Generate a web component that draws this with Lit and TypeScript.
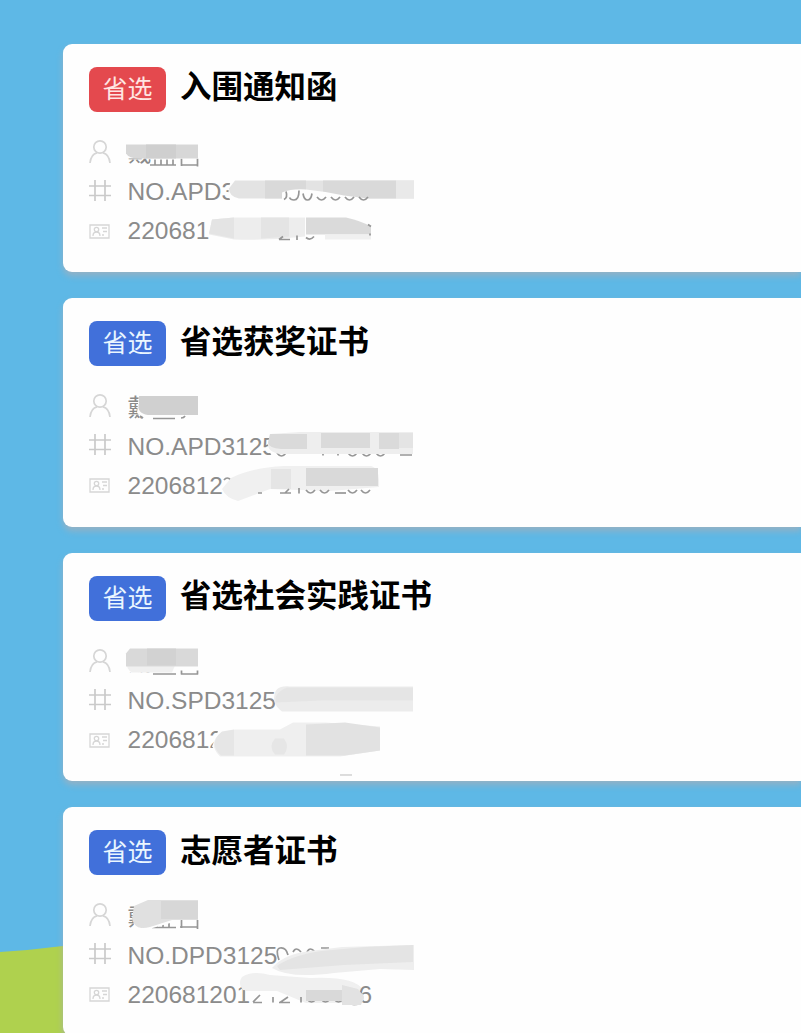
import { LitElement, html, css, svg, SVGTemplateResult } from "lit";
import { customElement, property } from "lit/decorators.js";

interface Certificate {
  badge: string;
  title: string;
  tone: "red" | "blue";
  name: string;
  serial: string;
  idNumber: string;
  top: number;
  cover: SVGTemplateResult;
}

// Rounded bottoms of partly covered digits, one per x position.
const arcs = (xs: number[], y: number) => svg`
  <path class="ink" d=${xs.map((x) => `M${x} ${y - 3}q4.5 6 9 0`).join("")} />`;

const certificates: Certificate[] = [
  {
    badge: "省选", title: "入围通知函", tone: "red", top: 43.500,
    name: "戴", serial: "NO.APD3", idNumber: "220681",
    cover: svg`
      <path class="ink" d="M150 164.500H176M155 159v5M161 159v5M167 159v5M173 159v5M181.500 158v7.500M181 164.500H198M197.500 158v8" />
      <path fill="#fefefe" d="M125 138H200V158H125z" />
      <path fill="#d7d7d7" d="M126 144H198V158H139Q129 158 126 153z" />
      <path fill="#cfcfcf" d="M146 144h30v14h-30z" />
      <path fill="#fefefe" d="M231 180H290V205H233Q227 197 229 186z" />
      <path fill="#e3e3e3" d="M235 180H414V198H239Q229 196 229 188z" />
      <path fill="#d9d9d9" d="M265 180h41v18h-41zM323 180h73v18h-73z" />
      <path fill="#e9e9e9" d="M396 180h18v18h-18z" />
      <path fill="#fefefe" d="M282 192q10-4 24-3q20 2 38 6l24 3v5H282z" />
      <path class="ink" d="M286 191q2 6-2 8M299 190q0 9.500-5 9.500q-3.500 0-4.500-2.500M303 193q1 6.500 4.500 6.500t4.500-6.500" />
      ${arcs([317, 331, 345, 359], 199.5)}
      <path fill="#fefefe" d="M209 216H375V244H214Q207 238 207 226z" />
      <path fill="#ededed" d="M212 219L234 217H305V236Q270 240 234 239L209 234z" />
      <path fill="#e4e4e4" d="M212 219L234 217V238L209 233zM261 217h28v19l-28 2z" />
      <path fill="#dadada" d="M306 217H346Q360 220 371 226V234H306z" />
      <path fill="#f0f0f0" d="M325 234h46v5h-46z" />
      <path class="ink" d="M279 239H290M283 236l-4 3M297 235v4.500M306 237q4 3.500 8-1M368 224l3 2M370 233v2" />`,
  },
  {
    badge: "省选", title: "省选获奖证书", tone: "blue", top: 298,
    name: "戴", serial: "NO.APD3125", idNumber: "2206812",
    cover: svg`
      <path fill="#fefefe" d="M139 394H201V421H148L137 413z" />
      <path fill="#d0d0d0" d="M139 396H198V415H148Q136 413 139 403z" />
      <path class="ink" d="M138 415l-3 3M140 416l3 2M153 418.500H175M181 418q3 0 4-2" />
      <path fill="#fefefe" d="M269 432H416V460H277Q268 455 270 447z" />
      ${arcs([277, 348, 362, 376], 456)}
      <path class="ink" d="M400 455H412M323 453v2.500M338 453v2.500" />
      <path fill="#eee" d="M270 434L300 432H413V454H280Q267 452 268 443z" />
      <path fill="#dadada" d="M270 434H307V449H281Q269 448 268 443zM321 433h49v15h-49zM379 433h20v16h-20z" />
      <path fill="#e4e4e4" d="M399 433h14v15h-14z" />
      <path class="ink" d="M224 480q3-4 7 0" />
      <path fill="#f0f0f0" d="M231 478Q250 468 284 466H371Q380 468 379 487L330 491L270 489L238 501Q226 498 222 489z" />
      <path fill="#e5e5e5" d="M271 469h20v20h-20z" />
      <path fill="#d9d9d9" d="M306 468H378V486H306z" />
      <path class="ink" d="M258 493h4M280 493H291M289 489l-4 4M299 488v5.500" />
      ${arcs([306, 320, 348, 361], 493)}
      <path class="ink" d="M335 493H346" />`,
  },
  {
    badge: "省选", title: "省选社会实践证书", tone: "blue", top: 552.500,
    name: "戴", serial: "NO.SPD3125", idNumber: "2206812",
    cover: svg`
      <path fill="#fefefe" d="M125 645H201V672H125z" />
      <path class="ink" d="M153 673.500H176M181.500 670v4M181 673.500H198M197.500 670v4" />
      <path fill="#f0f0f0" d="M126 658H178L172 672H132Q126 669 126 658z" />
      <path fill="#d9d9d9" d="M130 648H198V666H126V653z" />
      <path fill="#d2d2d2" d="M147 648h29v17h-29z" />
      <path fill="#ececec" d="M276 690Q280 685 290 686H413V711H282Q270 702 276 690z" />
      <path fill="#e5e5e5" d="M287 687H413V700H321L276 702Q273 693 287 687z" />
      <path fill="#fefefe" d="M219 728H232V754H219L212 746z" />
      <path fill="#efefef" d="M221 732L235 729H280L293 722L325 722L380 726V750L340 756H220Q207 743 221 732z" />
      <path fill="#e6e6e6" d="M222 731L234 729V755H221Q208 743 222 731zM275 738h9q6 8 0 16h-9q-7-8 0-16z" />
      <path fill="#e2e2e2" d="M306 724L345 722L380 727V750L345 755H306z" />
      <path stroke="#bbb" d="M340 774.500h12" />`,
  },
  {
    badge: "省选", title: "志愿者证书", tone: "blue", top: 807,
    name: "戴", serial: "NO.DPD3125", idNumber: "220681201",
    cover: svg`
      <path class="ink" d="M152 927.500H176M157 922v5M163 922v5M169 922v5M181.500 920v8M180 927H198M197.500 920v9" />
      <path fill="#fefefe" d="M134 900H200V920H181L149 929L134 926z" />
      <path fill="#e0e0e0" d="M134 906L148 900H198V920H172L150 927Q135 931 132 919z" />
      <path fill="#d7d7d7" d="M161 901h37v18h-37z" />
      <path class="ink" d="M279 960q-4-11 1-12q6-1 8 7M293 952q3-6 8 0M307 952q3-6 8 0M321 948h8" />
      <path fill="#eee" d="M274 966Q285 954 310 951L342 947L414 945V970L380 969L334 973Q290 979 272 968z" />
      <path fill="#e4e4e4" d="M277 966Q290 956 321 951L365 947L413 945V962L344 965L280 970z" />
      <path fill="#f0f0f0" d="M242 977Q253 970 270 975L310 978Q355 976 363 990L350 1003H306L277 991L244 991Q237 984 242 977z" />
      <path class="ink" d="M244 990v12.500M253 1002.500H262M260 995l-7 7M273 997v5.500M279 1002.500H290M288 997l-8 5.500M301 997v5.500" />
      ${arcs([307, 321, 334], 1002)}
      <text class="digit" x="358.500" y="1002.500">6</text>
      <path fill="#d9d9d9" d="M306 990H354L363 994Q366 1004 354 1006L342 1001H306z" />
      <path fill="#e2e2e2" d="M342 985L358 989L364 997L361 1005L342 1005z" />`,
  },
];

@customElement("certificate-card")
export class CertificateCard extends LitElement {
  static styles = css`
    :host {
      display: block;
      flex: none;
      position: relative;
      height: 228.500px;
      box-sizing: border-box;
      padding: 23px 0 0 26px;
      background: #fefefe;
      border-radius: 9px 0 0 9px;
      box-shadow: 0 4px 6px rgba(165, 175, 185, 0.75);
    }
    .head { display: flex; align-items: center; gap: 14px; height: 45px; }
    .badge {
      width: 77px; height: 45px; border-radius: 8px;
      display: flex; align-items: center; justify-content: center;
      color: #eaf6ff; font-size: 25px; line-height: 45px;
    }
    .red { background: #e4494e; color: #ffe5e2; }
    .blue { background: #4170da; }
    .title {
      margin: 0; color: #000; font-size: 31.500px; font-weight: 700;
      line-height: 42px; padding-bottom: 4px; white-space: nowrap;
    }
    .rows { padding-top: 21.500px; }
    .row { display: flex; align-items: center; gap: 16.500px; height: 39px; color: #8b8b8b; }
    .icon { width: 22px; height: 26px; flex: none; fill: none; stroke: #d6d6d6; stroke-width: 1.700; }
    .text { font-size: 24.500px; line-height: 39px; white-space: nowrap; }
    .name { font-size: 24px; line-height: 35px; }
    .person { padding-bottom: 2px; }
    .cover { position: absolute; left: 0; top: 0; width: 738px; height: 228px; overflow: visible; }
    .ink { fill: none; stroke: #969696; stroke-width: 1.700; }
    .digit { fill: #8b8b8b; font-size: 24.500px; }
  `;

  @property({ attribute: false }) item!: Certificate;

  render() {
    const c = this.item;
    return html`
      <div class="head">
        <span class="badge ${c.tone}">${c.badge}</span>
        <h2 class="title">${c.title}</h2>
      </div>
      <div class="rows">
        <div class="row">
          <svg class="icon person" viewBox="0 0 22 26"><circle cx="11" cy="8" r="6.200" /><path d="M1 24Q2 15 8 13.800M14 13.800Q20 15 21 24" /></svg>
          <span class="text name">${c.name}</span>
        </div>
        <div class="row">
          <svg class="icon" viewBox="0 0 22 26"><path stroke="#cacaca" d="M0 7H22M0 16.500H22M6 1V22M16 1V22" /></svg>
          <span class="text">${c.serial}</span>
        </div>
        <div class="row">
          <svg class="icon" viewBox="0 0 22 26"><path stroke-width="1.300" d="M1 7H20V20H1zM4 18Q4 14 7.500 14Q11 14 11 18M13 10H18M14 13.500H18M13 17H15" /><circle cx="7.500" cy="11.500" r="2.200" stroke-width="1.300" /></svg>
          <span class="text">${c.idNumber}</span>
        </div>
      </div>
      <svg class="cover" viewBox="63 ${c.top} 738 228">${c.cover}</svg>
    `;
  }
}

@customElement("app-root")
export class AppRoot extends LitElement {
  static styles = css`
    :host {
      display: block; position: relative; height: 1033px; overflow: hidden;
      background: #5eb8e6;
      font-family: "Liberation Sans", "Noto Sans CJK SC", sans-serif;
    }
    .hill { position: absolute; left: 0; bottom: 0; width: 90px; height: 90px; }
    .list {
      position: relative; display: flex; flex-direction: column; gap: 26px;
      padding: 43.500px 0 0 63px;
    }
  `;

  render() {
    return html`
      <svg class="hill" viewBox="0 0 90 90"><path fill="#afd14e" d="M0 9Q32 7 63 3L90 0V90H0z" /></svg>
      <div class="list">
        ${certificates.map((c) => html`<certificate-card .item=${c}></certificate-card>`)}
      </div>
    `;
  }
}
